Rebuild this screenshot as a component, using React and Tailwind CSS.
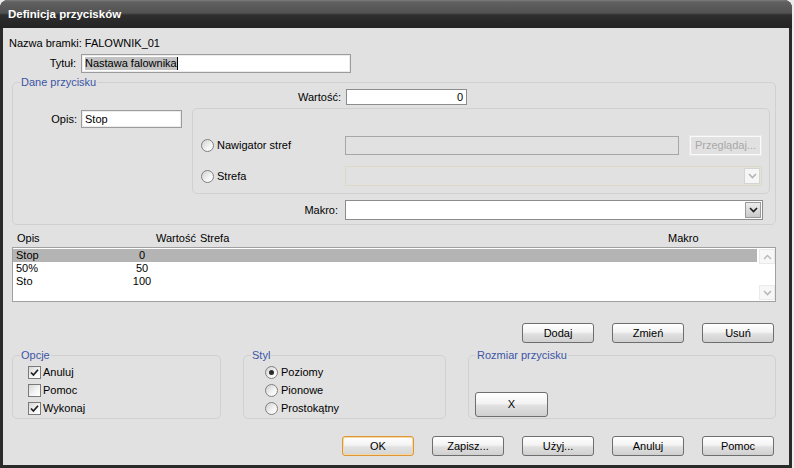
import React from "react";

function Radio({ checked }) {
  return (
    <span className="relative inline-flex items-center justify-center w-[13px] h-[13px] rounded-full border border-[#808080] bg-[linear-gradient(135deg,#cfcfcf,#f4f4f4_60%,#ffffff)] shrink-0">
      {checked && <span className="w-[5px] h-[5px] rounded-full bg-[#2a2a2a]" />}
    </span>
  );
}

function Check({ checked }) {
  return (
    <span className="inline-flex items-center justify-center w-[13px] h-[13px] border border-[#7a7a7a] bg-[linear-gradient(135deg,#d6d6d6,#f6f6f6_60%,#ffffff)] shrink-0">
      {checked && (
        <svg width="11" height="11" viewBox="0 0 11 11">
          <path d="M2 5.5 L4.4 8 L9 2.8" fill="none" stroke="#1e1e1e" strokeWidth="1.7" />
        </svg>
      )}
    </span>
  );
}

function ChevronDown({ color = "#222" }) {
  return (
    <svg width="9" height="6" viewBox="0 0 9 6">
      <path d="M1 1 L4.5 4.5 L8 1" fill="none" stroke={color} strokeWidth="1.6" />
    </svg>
  );
}

function ChevronUp({ color = "#b8b8b8" }) {
  return (
    <svg width="9" height="6" viewBox="0 0 9 6">
      <path d="M1 5 L4.5 1.5 L8 5" fill="none" stroke={color} strokeWidth="1.4" />
    </svg>
  );
}

function Btn({ children, def, w = "w-[72px]", h = "h-[20px]" }) {
  return (
    <div
      className={
        "flex items-center justify-center rounded-[3px] border text-black " +
        w +
        " " +
        h +
        " " +
        (def
          ? "border-[#dc9638] shadow-[inset_0_0_0_1px_#f7d9a0] bg-[linear-gradient(to_bottom,#ffffff,#f3f3f3_45%,#e2e2e2_55%,#d4d4d4)]"
          : "border-[#6e6e6e] bg-[linear-gradient(to_bottom,#ffffff,#f3f3f3_45%,#e0e0e0_55%,#d0d0d0)]")
      }
    >
      {children}
    </div>
  );
}

export default function App() {
  return (
    <div className="w-[794px] h-[468px] bg-[#ececec] font-['Liberation_Sans',Arial,sans-serif] text-[11px] leading-[13px] text-black">
      <div className="w-[792px] h-[468px] rounded-t-[8px] bg-[#2a2a2a] flex flex-col overflow-hidden">
        {/* Title bar */}
        <div className="h-[28px] shrink-0 flex items-center pl-[8px] bg-[linear-gradient(to_bottom,#7c7c7c_0%,#606060_8%,#525252_46%,#2e2e2e_54%,#232323_100%)] text-white font-bold text-[11.5px]">
          Definicja przycisków
        </div>

        {/* Body */}
        <div className="flex-1 ml-[3px] mr-[3px] mb-[3px] bg-[#e1e1e1] flex flex-col">
          <div className="mt-[8px] pl-[6px] h-[14px] flex items-center">Nazwa bramki: FALOWNIK_01</div>

          <div className="mt-[4px] flex items-center h-[19px]">
            <div className="w-[73px] text-right">Tytuł:</div>
            <div className="ml-[5px] w-[270px] h-[19px] border border-[#9c9c9c] bg-white shadow-[inset_0_0_0_1px_#ececec] flex items-center pl-[3px]">
              <span className="bg-[#c2c2c2]">Nastawa falownika</span>
              <span className="w-[1px] h-[13px] bg-black" />
            </div>
          </div>

          {/* Dane przycisku */}
          <fieldset className="mt-[3px] ml-[9px] w-[764px] border border-[#d0d0d0] rounded-[5px] pb-[4px]">
            <legend className="ml-[7px] px-[1px] text-[#3c55a5] leading-[13px]">Dane przycisku</legend>

            <div className="flex items-center h-[16px]">
              <div className="w-[328px] text-right">Wartość:</div>
              <div className="ml-[5px] w-[121px] h-[16px] border border-[#8c8c8c] bg-white flex items-center justify-end pr-[3px] leading-[12px]">
                0
              </div>
            </div>

            <div className="mt-[3px] flex">
              <div className="w-[179px] flex items-start">
                <div className="w-[64px] h-[18px] mt-[2px] flex items-center justify-end">Opis:</div>
                <div className="ml-[4px] mt-[2px] w-[101px] h-[18px] border border-[#9c9c9c] bg-white shadow-[inset_0_0_0_1px_#ececec] flex items-center pl-[3px]">
                  Stop
                </div>
              </div>

              <div className="w-[578px] h-[86px] border border-[#d0d0d0] rounded-[5px] pt-[27px] pl-[8px] flex flex-col">
                <div className="flex items-center h-[19px]">
                  <div className="w-[144px] flex items-center">
                    <Radio />
                    <span className="ml-[3px]">Nawigator stref</span>
                  </div>
                  <div className="w-[334px] h-[19px] border border-[#a6a6a6] bg-[#e1e1e1]" />
                  <div className="ml-[11px] w-[71px] h-[19px] border border-[#fafafa] shadow-[0_0_0_1px_#e8e8e8] flex items-center justify-center text-[#a8a8a8]">
                    Przeglądaj...
                  </div>
                </div>
                <div className="mt-[11px] flex items-center h-[20px]">
                  <div className="w-[144px] flex items-center">
                    <Radio />
                    <span className="ml-[3px]">Strefa</span>
                  </div>
                  <div className="w-[417px] h-[20px] border border-[#dcdac4] bg-[#e1e1e1] flex justify-end items-center pr-[1px]">
                    <div className="w-[16px] h-[16px] border border-[#d4d4d4] bg-[#f6f6f6] flex items-center justify-center">
                      <ChevronDown color="#b4b4b4" />
                    </div>
                  </div>
                </div>
              </div>
            </div>

            <div className="mt-[6px] flex items-center h-[20px]">
              <div className="w-[325px] text-right">Makro:</div>
              <div className="ml-[7px] w-[418px] h-[20px] border border-[#8c8c8c] bg-white flex justify-end items-center pr-[1px]">
                <div className="w-[16px] h-[16px] border border-[#9a9a9a] bg-[linear-gradient(to_bottom,#ececec,#c9c9c9)] flex items-center justify-center">
                  <ChevronDown color="#1e1e1e" />
                </div>
              </div>
            </div>
          </fieldset>

          {/* List header */}
          <div className="mt-[7px] h-[13px] flex items-center pl-[14px]">
            <div className="w-[139px]">Opis</div>
            <div className="w-[512px] flex">
              <span>Wartość</span>
              <span className="ml-[4px]">Strefa</span>
            </div>
            <div>Makro</div>
          </div>

          {/* List */}
          <div className="mt-[2px] ml-[9px] w-[764px] h-[55px] border border-[#a0a0a0] bg-white flex">
            <div className="w-[744px] pt-[1px] flex flex-col">
              {[
                ["Stop", "0", true],
                ["50%", "50", false],
                ["Sto", "100", false],
              ].map(([n, v, sel]) => (
                <div key={n} className={"h-[13px] flex items-center " + (sel ? "bg-[#b4b4b4]" : "")}>
                  <div className="w-[113px] pl-[3px]">{n}</div>
                  <div className="w-[32px] text-center">{v}</div>
                </div>
              ))}
            </div>
            <div className="ml-[2px] w-[16px] flex flex-col justify-between py-[1px]">
              <div className="h-[15px] border border-[#eaeaea] bg-[#f7f7f7] flex items-center justify-center">
                <ChevronUp />
              </div>
              <div className="h-[15px] border border-[#eaeaea] bg-[#f7f7f7] flex items-center justify-center">
                <ChevronDown color="#b8b8b8" />
              </div>
            </div>
          </div>

          {/* Dodaj / Zmień / Usuń */}
          <div className="mt-[21px] flex justify-end gap-[18px] pr-[15px]">
            <Btn>Dodaj</Btn>
            <Btn>Zmień</Btn>
            <Btn>Usuń</Btn>
          </div>

          {/* Groups */}
          <div className="mt-[6px] flex pl-[9px] gap-[22px]">
            <fieldset className="w-[209px] h-[70px] border border-[#d0d0d0] rounded-[5px]">
              <legend className="ml-[7px] px-[1px] text-[#3c55a5] leading-[13px]">Opcje</legend>
              <div className="pl-[15px] pt-[1px] flex flex-col">
                {[
                  ["Anuluj", true],
                  ["Pomoc", false],
                  ["Wykonaj", true],
                ].map(([t, c]) => (
                  <div key={t} className="h-[18px] flex items-center">
                    <Check checked={c} />
                    <span className="ml-[2px]">{t}</span>
                  </div>
                ))}
              </div>
            </fieldset>

            <fieldset className="w-[203px] h-[70px] border border-[#d0d0d0] rounded-[5px]">
              <legend className="ml-[7px] px-[1px] text-[#3c55a5] leading-[13px]">Styl</legend>
              <div className="pl-[21px] pt-[1px] flex flex-col">
                {[
                  ["Poziomy", true],
                  ["Pionowe", false],
                  ["Prostokątny", false],
                ].map(([t, c]) => (
                  <div key={t} className="h-[18px] flex items-center">
                    <Radio checked={c} />
                    <span className="ml-[3px]">{t}</span>
                  </div>
                ))}
              </div>
            </fieldset>

            <fieldset className="w-[308px] h-[70px] border border-[#d0d0d0] rounded-[5px]">
              <legend className="ml-[7px] px-[1px] text-[#3c55a5] leading-[13px]">Rozmiar przycisku</legend>
              <div className="pl-[6px] pt-[30px]">
                <Btn w="w-[73px]" h="h-[25px]">X</Btn>
              </div>
            </fieldset>
          </div>

          {/* Bottom buttons */}
          <div className="mt-[17px] flex justify-end gap-[18px] pr-[15px]">
            <Btn def>OK</Btn>
            <Btn>Zapisz...</Btn>
            <Btn>Użyj...</Btn>
            <Btn>Anuluj</Btn>
            <Btn>Pomoc</Btn>
          </div>
        </div>
      </div>
    </div>
  );
}
